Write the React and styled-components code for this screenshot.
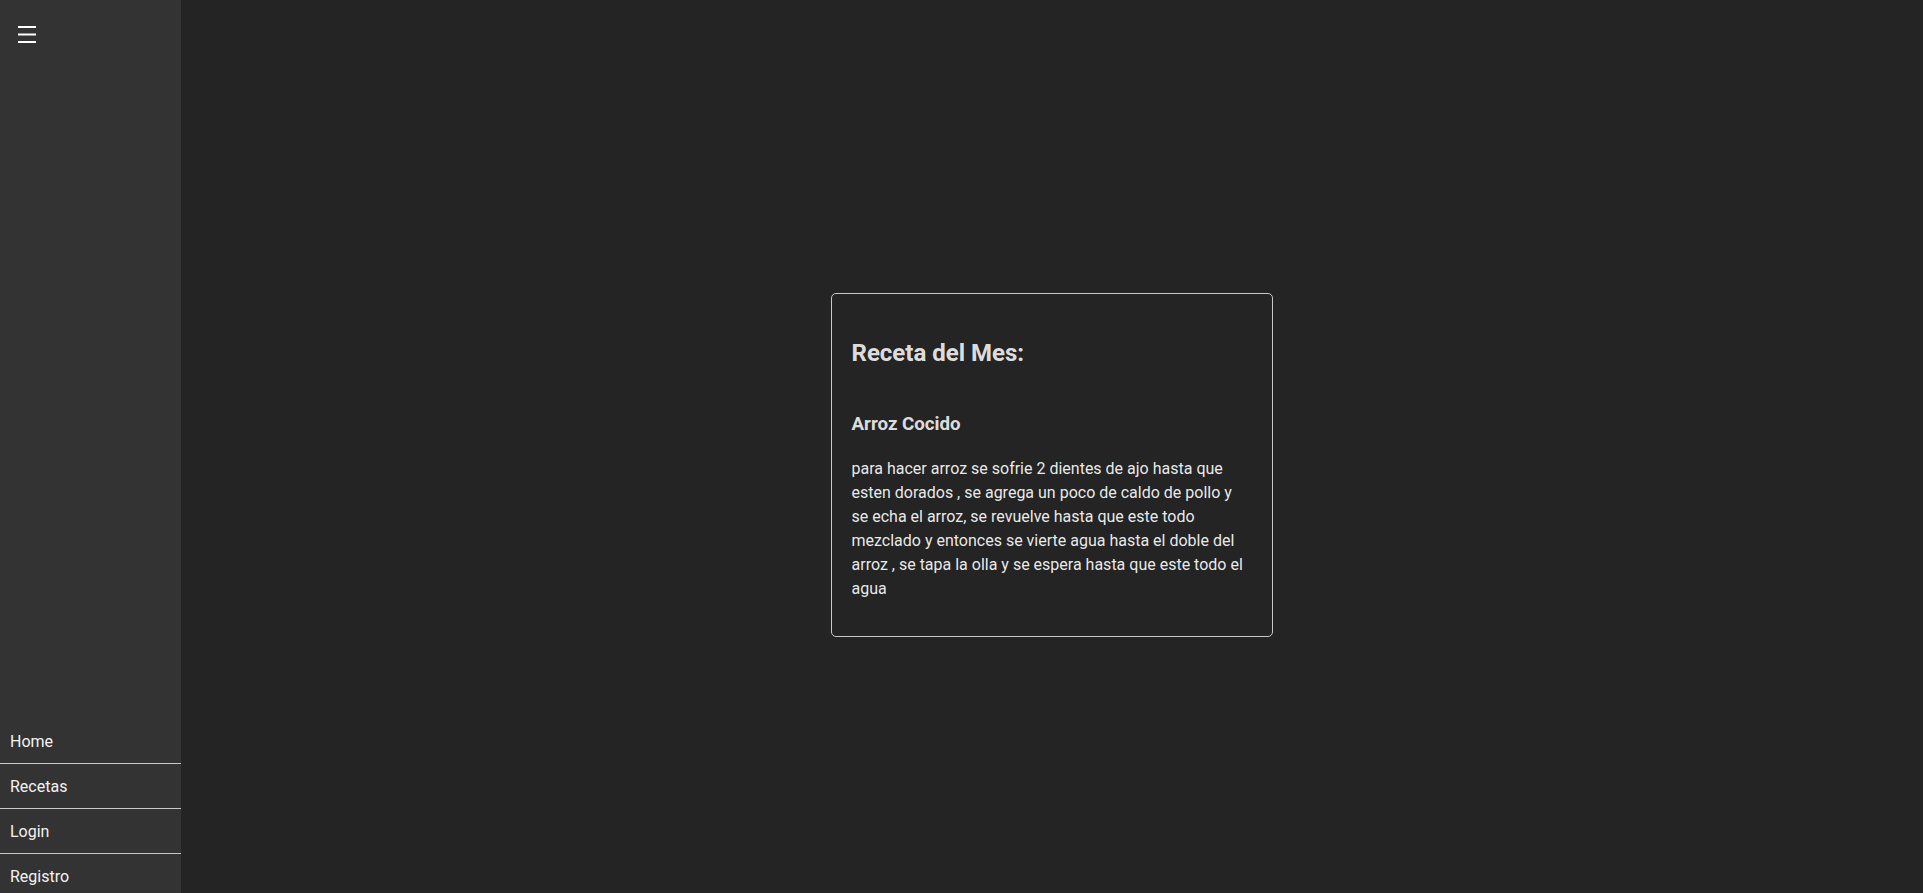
import React from 'react'
import styled, { createGlobalStyle } from 'styled-components'

const GlobalStyle = createGlobalStyle`
  body {
    margin: 0;
    background-color: #242424;
    color: rgba(255, 255, 255, 0.87);
    font-family: Roboto, "Liberation Sans", sans-serif;
    line-height: 1.5;
    font-weight: 400;
  }
`

const Layout = styled.div`
  display: flex;
  min-height: 100vh;
`

const Sidebar = styled.aside`
  flex-shrink: 0;
  width: 181px;
  height: calc(100vh + 5px);
  background-color: #333333;
  display: flex;
  flex-direction: column;
`

const MenuButton = styled.button`
  align-self: flex-start;
  margin: 26px 0 0 18px;
  padding: 0;
  border: none;
  background: none;
  color: #ffffff;
  cursor: pointer;
  line-height: 0;
`

const Nav = styled.nav`
  margin-top: auto;
  display: flex;
  flex-direction: column;
`

const NavItem = styled.a`
  display: block;
  padding: 11px 10px 9px;
  color: #f2f2f2;
  font-size: 16px;
  text-decoration: none;
  border-bottom: ${(p) => (p.last ? 'none' : '1px solid #c8c8c8')};
  cursor: pointer;
`

const Main = styled.main`
  flex: 1;
  display: flex;
  align-items: center;
  justify-content: center;
  padding: 32px 1px 0 0;
`

const Card = styled.section`
  width: 400px;
  padding: 21px 20px 19px;
  border: 1px solid #c8c8c8;
  border-radius: 5px;
  display: flex;
  flex-direction: column;
`

const Title = styled.h2`
  font-size: 24px;
  font-weight: 700;
  margin: 20px 0;
`

const RecipeName = styled.h3`
  font-size: 18.72px;
  font-weight: 700;
  margin: 18.72px 0;
`

const RecipeText = styled.p`
  font-size: 16px;
  color: rgba(255, 255, 255, 0.92);
  margin: 16px 0;
`

const MenuIcon = () => (
  <svg width="18" height="18" viewBox="0 0 18 18" fill="currentColor">
    <rect x="0" y="0" width="18" height="2" />
    <rect x="0" y="7.5" width="18" height="2" />
    <rect x="0" y="15" width="18" height="2" />
  </svg>
)

const links = ['Home', 'Recetas', 'Login', 'Registro']

export default function App() {
  return (
    <>
      <GlobalStyle />
      <Layout>
        <Sidebar>
          <MenuButton aria-label="menu">
            <MenuIcon />
          </MenuButton>
          <Nav>
            {links.map((l, i) => (
              <NavItem key={l} last={i === links.length - 1}>
                {l}
              </NavItem>
            ))}
          </Nav>
        </Sidebar>
        <Main>
          <Card>
            <Title>Receta del Mes:</Title>
            <div>
              <RecipeName>Arroz Cocido</RecipeName>
              <RecipeText>
                para hacer arroz se sofrie 2 dientes de ajo hasta que esten dorados , se agrega un poco de
                caldo de pollo y se echa el arroz, se revuelve hasta que este todo mezclado y entonces se
                vierte agua hasta el doble del arroz , se tapa la olla y se espera hasta que este todo el agua
              </RecipeText>
            </div>
          </Card>
        </Main>
      </Layout>
    </>
  )
}
